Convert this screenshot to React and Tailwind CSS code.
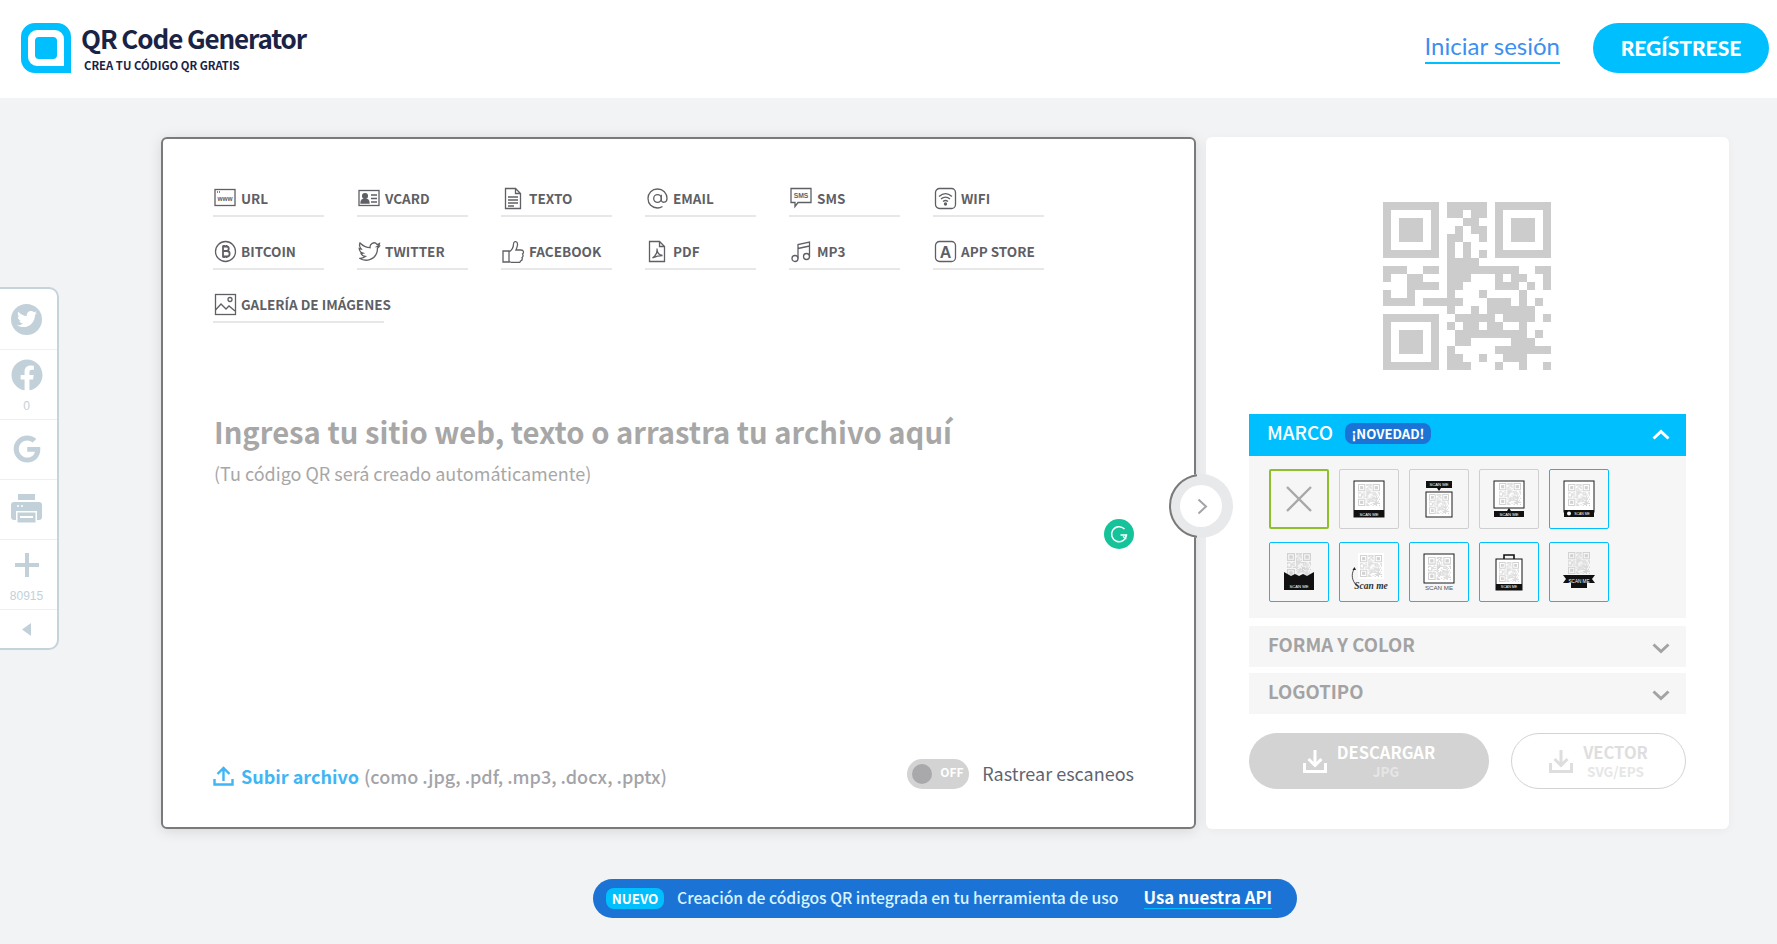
import React from 'react';
import { FaFacebook, FaGoogle, FaTwitter } from 'react-icons/fa';

const FONT = "font-['Noto_Sans_CJK_SC','Noto_Sans',sans-serif]";

const QR_ROWS = [
    [8,9,10,11,12], [8,9,11,12], [10,11], [9,11,12], [8,9,12], [8,10], [8,10,12], [8,9,10,11],
    [0,1,2,5,6,8,9,10,11,12,13,14,15,16,19,20], [0,3,4,8,9,10,14,16,17,20], [3,4,5,6,8,9,14,15,16,18,20],
    [0,3,8,12,17], [0,1,2,3,5,6,7,8,9,13,14,15,17,19], [8,11,13,14,15,16,17,18],
    [9,10,11,12,13,15,16,17,18,20], [8,10,11,13,14,17], [9,10,11,12,13,14,15,16,17,19],
    [9,10,16,17,18], [8,14,15,16,17,18,19,20], [8,9,12,15,16,17], [8,9,10,14,17,20],
];

const Finder = ({ x, y }) => (
    <g>
        <path fillRule="evenodd" d={`M${x} ${y}h7v7h-7zM${x + 1} ${y + 1}v5h5v-5z`} />
        <rect x={x + 2} y={y + 2} width="3" height="3" />
    </g>
);

const QrMarks = ({ fill = '#cccccc', crisp = true }) => (
    <g fill={fill} shapeRendering={crisp ? 'crispEdges' : 'auto'}>
        <Finder x={0} y={0} />
        <Finder x={14} y={0} />
        <Finder x={0} y={14} />
        {QR_ROWS.map((cols, r) => cols.map(c => <rect key={`${r}-${c}`} x={c} y={r} width="1" height="1" />))}
    </g>
);

const MiniQr = ({ x, y, size, fill = '#d2d2d2' }) => (
    <svg x={x} y={y} width={size} height={size} viewBox="0 0 21 21"><QrMarks fill={fill} crisp={false} /></svg>
);

const ScanText = ({ x, y, fill = '#fff', size = 4.2 }) => (
    <text x={x} y={y} textAnchor="middle" fontSize={size} fill={fill} fontFamily="Liberation Sans, sans-serif">SCAN ME</text>
);

const frames = [
    <g><rect x="15" y="12" width="30" height="36" fill="#fff" stroke="#1a1a1a" strokeWidth="1" /><MiniQr x={19} y={15} size={22} /><rect x="15" y="41" width="30" height="7" fill="#111" /><ScanText x={30} y={46.5} /></g>,
    <g><rect x="17" y="12" width="26" height="7" fill="#111" /><path d="M28 19h4l-2 3z" fill="#111" /><ScanText x={30} y={17.2} /><rect x="17" y="23" width="26" height="25" fill="#fff" stroke="#1a1a1a" strokeWidth="1" /><MiniQr x={20} y={25} size={20} /></g>,
    <g><rect x="15" y="12" width="30" height="27" fill="#fff" stroke="#1a1a1a" strokeWidth="1" /><MiniQr x={20} y={14} size={22} /><path d="M28 42l2-3 2 3z" fill="#111" /><rect x="15" y="42" width="30" height="6" fill="#111" /><ScanText x={30} y={46.5} /></g>,
    <g><rect x="15" y="12" width="30" height="31" fill="#fff" stroke="#1a1a1a" strokeWidth="1" /><MiniQr x={19} y={15} size={22} /><rect x="15" y="41" width="30" height="7" fill="#111" /><circle cx="20" cy="44.5" r="2" fill="#fff" /><ScanText x={33} y={46} size={3.4} /></g>,
    <g><MiniQr x={18} y={11} size={24} /><path d="M15 30l7 4 4-2 4 2 4-2 4 2 7-4v18H15z" fill="#111" /><ScanText x={30} y={45.5} /></g>,
    <g><rect x="19" y="11" width="26" height="26" fill="#fff" /><MiniQr x={21} y={13} size={22} /><path d="M15 27c-3 6-2 11 2 16" fill="none" stroke="#222" strokeWidth="0.8" /><path d="M13.5 28l2-3 1.5 3z" fill="#222" /><text x="32" y="47" textAnchor="middle" fontSize="9.500" fontWeight="700" fontStyle="italic" fill="#333" fontFamily="Liberation Serif, serif">Scan me</text></g>,
    <g><rect x="15" y="12" width="30" height="29" fill="#fff" stroke="#1a1a1a" strokeWidth="1" /><MiniQr x={19} y={15} size={23} /><ScanText x={30} y={48} fill="#555" size={6.2} /></g>,
    <g><path d="M25 17v-4h10v4" fill="none" stroke="#111" strokeWidth="1.6" /><rect x="17" y="17" width="26" height="31" fill="#fff" stroke="#111" strokeWidth="1" /><MiniQr x={20} y={20} size={20} /><rect x="17" y="42" width="26" height="6" fill="#111" /><ScanText x={30} y={46.4} size={3.6} /></g>,
    <g><MiniQr x={19} y={10} size={22} /><path d="M14 33h32l-3 4 3 4H38v5H22v-5H14l3-4z" fill="#111" /><ScanText x={30} y={41} size={4.6} /></g>,
];

const FrameThumb = ({ border, children }) => (
    <div className={`w-[60px] h-[60px] rounded-[2px] ${border} bg-[#f6f6f6]`}>
        <svg width="100%" height="100%" viewBox="0 0 58 58">
            <g transform="translate(-1 -1)">{children}</g>
        </svg>
    </div>
);

const TabIcon = ({ children }) => (
    <svg width="23" height="23" viewBox="0 0 23 23" fill="none" stroke="#5f5f66" strokeWidth="1.3" className="shrink-0">{children}</svg>
);

const tabs = [
    { label: 'URL', icon: <><rect x="1" y="2.5" width="20" height="16" /><path d="M3 5h1M5 5h1" /><text x="11" y="14" textAnchor="middle" fontSize="6.5" fontWeight="700" fill="#5f5f66" stroke="none" fontFamily="Liberation Sans, sans-serif">www</text></> },
    { label: 'VCARD', icon: <><rect x="1" y="3.5" width="20" height="15" /><circle cx="7" cy="9" r="2.4" fill="#5f5f66" /><path d="M3 16c0-5 8-5 8 0z" fill="#5f5f66" /><path d="M13 8h6M13 11.500h6M13 15h6" /></> },
    { label: 'TEXTO', icon: <><path d="M3.500 1.500h10l5 5v15h-15zM13.500 1.500v5h5" /><path d="M6 10h10M6 13h10M6 16h10M6 19h6" /></> },
    { label: 'EMAIL', icon: <><circle cx="11.500" cy="11.500" r="3.800" /><path d="M15.300 7.700v5.300c0 3.200 5.700 3.200 5.700-1.500C21 6 17 2 11.500 2S2 6 2 11.500 6 21 11.500 21c2 0 3.500-.5 5-1.500" /></> },
    { label: 'SMS', icon: <><path d="M1 1.500h20v14H8l-3 4v-4H1z" /><text x="11" y="11" textAnchor="middle" fontSize="6.800" fontWeight="700" fill="#5f5f66" stroke="none" fontFamily="Liberation Sans, sans-serif">SMS</text></> },
    { label: 'WIFI', icon: <><rect x="1.500" y="1.500" width="20" height="20" rx="4" /><path d="M5 9.500c4-3.500 9-3.500 13 0M7 12c3-2.500 6-2.500 9 0M9 14.500c1.500-1.200 3.500-1.200 5 0" /><circle cx="11.500" cy="17" r="1" fill="#5f5f66" /></> },
    { label: 'BITCOIN', icon: <><circle cx="11.500" cy="11.500" r="10" /><path d="M9 6.500h3.500c3 0 3 4.500 0 4.500H9h4c3.500 0 3.500 5.500 0 5.500H9zM10 5v2M12.500 5v2M10 16v2M12.500 16v2" strokeWidth="1.800" /></> },
    { label: 'TWITTER', icon: <path d="M21.500 3.500c-.8.600-1.500.9-2.500 1-1-1.500-3.200-2-4.800-1.200-1.800.9-2.400 2.600-2.100 4.400C8 7.500 4.500 5.500 2 3c-1 2.500-.3 4.500 1.200 6-.8 0-1.400-.2-2-.5.200 2.500 1.500 4 3.800 4.700-.7.200-1.400.2-2 .1.700 2 2.200 3 4.300 3.200-2 1.500-4 2-6 1.800 7 4 15 1.500 17.500-5.500.5-1.500.7-3 .6-4.500 1-.7 1.800-1.500 2.100-2.300-.8.300-1.500.5-2.300.5.900-.5 1.800-1.300 2.300-2.500z" /> },
    { label: 'FACEBOOK', icon: <><path d="M1 11h6v11H1zM7 12c3-2 4.500-5 4.500-8 0-3.500 4.500-3 4 1-.2 1.500-.7 3-1.500 5h5c3 0 3 3 1.500 4 1 1.500.5 3-.5 3.500.5 1.500 0 3-1.500 3.500 0 1-.5 1.500-2 1.500H11c-2 0-3-.5-4-1" /></> },
    { label: 'PDF', icon: <><path d="M3.500 1.500h10l5 5v15h-15zM13.500 1.500v5h5" /><path d="M6.500 18c3-2 5-6 4.500-9.500 0 4 2 6.500 5.500 7-3.500 0-7 1-10 2.500z" /></> },
    { label: 'MP3', icon: <><circle cx="5" cy="18.500" r="3" /><circle cx="16.500" cy="16.500" r="3" /><path d="M8 18.500V4.500L19.500 2v14.500M8 8.500L19.500 6" /></> },
    { label: 'APP STORE', icon: <><rect x="1.500" y="1.500" width="20" height="20" rx="4" /><text x="11.500" y="17.500" textAnchor="middle" fontSize="16" fontWeight="700" fill="#5f5f66" stroke="none" fontFamily="Liberation Sans, sans-serif">A</text></> },
    { label: 'GALERÍA DE IMÁGENES', icon: <><rect x="1.500" y="1.500" width="20" height="20" /><circle cx="16" cy="6.500" r="2" /><path d="M1.500 17l5.500-6 5 5 3-3 6 5" /></> },
];

const DownloadIcon = ({ color, className }) => (
    <svg width="24" height="24" viewBox="0 0 24 24" fill="none" stroke={color} strokeWidth="3" className={className}>
        <path d="M12 1v15M5.500 10l6.500 6.500 6.500-6.500M1.500 14v8.500h21V14" />
    </svg>
);

const Chevron = ({ up }) => (
    <svg width="18" height="12" viewBox="0 0 18 12" fill="none" stroke={up ? '#fff' : '#a3a3a3'} strokeWidth="3" className={up ? 'rotate-180' : ''}>
        <path d="M1.500 2.500L9 9.500l7.500-7" />
    </svg>
);

const SideRow = ({ height, count, countGap = 'mt-[5px]', extra = '', children, last }) => (
    <div className={`${height} ${extra} pr-[4px] flex flex-col items-center justify-center ${last ? '' : 'border-b border-[#edf0f2]'}`}>
        {children}
        {count && <span className={`font-['Liberation_Sans',sans-serif] text-[12px] leading-[14px] ${countGap} text-[#c2d1d9]`}>{count}</span>}
    </div>
);

const App = () => {
    return (
        <div className={`${FONT} relative min-h-screen h-[944px] overflow-hidden bg-[#f2f3f5]`}>
            {/* Header */}
            <header className="h-[98px] bg-white flex items-center justify-between pl-[21px] pr-[8px] pb-[2px]">
                <div className="flex items-start">
                    <svg width="50" height="50" viewBox="0 0 50 50" className="shrink-0">
                        <path fillRule="evenodd" fill="#00bfff" d="M14 0h22a14 14 0 0 1 14 14v36H14A14 14 0 0 1 0 36V14A14 14 0 0 1 14 0zm2 7a9 9 0 0 0-9 9v18a9 9 0 0 0 9 9h27V16a9 9 0 0 0-9-9z" />
                        <rect x="14" y="14" width="22" height="22" rx="4" fill="#00bfff" />
                    </svg>
                    <div className="ml-[10px] pt-[1px]">
                        <div className="text-[26px] leading-[27px] font-bold tracking-[-1.100px] text-[#1b2345] whitespace-nowrap">QR Code Generator</div>
                        <div className="text-[11.300px] leading-[14px] mt-[7px] ml-[3px] font-bold text-[#1b2345] whitespace-nowrap">CREA TU CÓDIGO QR GRATIS</div>
                    </div>
                </div>
                <div className="flex items-center">
                    <a className="font-['Lato',sans-serif] text-[24px] leading-[30px] text-[#3b8ff0] border-b-2 border-[#00bfff] pb-[1px] mr-[33px] mb-[2px]">Iniciar sesión</a>
                    <button className="w-[176px] h-[50px] rounded-full bg-[#00bfff] text-white font-['Lato',sans-serif] font-black text-[21px]">REGÍSTRESE</button>
                </div>
            </header>

            {/* Share bar */}
            <aside className="absolute left-0 top-[287px] w-[59px] h-[363px] bg-white border-2 border-l-0 border-[#c5d3db] rounded-r-[10px] text-[#c2d1d9]">
                <SideRow height="h-[61px]">
                    <div className="w-[31px] h-[31px] rounded-full bg-[#c2d1d9] flex items-center justify-center"><FaTwitter size={20} color="#fff" /></div>
                </SideRow>
                <SideRow height="h-[70px]" count="0" countGap="mt-[8px]" extra="pt-[3px]"><FaFacebook size={32} /></SideRow>
                <SideRow height="h-[60px]" extra="pb-[1px]"><FaGoogle size={28} /></SideRow>
                <SideRow height="h-[60px]" extra="pb-[1px]">
                    <svg width="31" height="30" viewBox="0 0 31 30">
                        <rect x="7" y="0" width="17" height="6" fill="#c2d1d9" />
                        <rect x="0" y="8" width="31" height="18" rx="3" fill="#c2d1d9" />
                        <rect x="5" y="17" width="21" height="13" fill="#fff" />
                        <rect x="6.500" y="18.500" width="18" height="10" fill="#c2d1d9" />
                        <rect x="9" y="22" width="13" height="2" fill="#fff" />
                        <path d="M6 12h2M10 12h2" stroke="#fff" strokeWidth="1.500" />
                    </svg>
                </SideRow>
                <SideRow height="h-[70px]" count="80915" countGap="mt-[12px]" extra="pt-[7px]">
                    <svg width="24" height="24" viewBox="0 0 24 24" fill="#c2d1d9"><path d="M10 0h4v10h10v4H14v10h-4V14H0v-4h10z" /></svg>
                </SideRow>
                <SideRow height="h-[38px]" last>
                    <svg width="9" height="13" viewBox="0 0 9 13" fill="#c2d1d9"><path d="M9 0v13L0 6.500z" /></svg>
                </SideRow>
            </aside>

            <main className="flex pl-[161px] pt-[39px]">
                {/* Editor card */}
                <section className="relative w-[1035px] h-[692px] flex flex-col bg-white border-2 border-[#7a7a7a] rounded-[6px] shadow-[0_2px_14px_rgba(0,0,0,0.12)] pl-[50px] pr-[60px] pt-[44px] pb-[38px]">
                    <div className="flex flex-wrap w-[880px]">
                        {tabs.map(t => (
                            <div key={t.label} className={`${t.label.startsWith('GAL') ? 'w-[171px]' : 'w-[111px]'} h-[34px] pt-[4px] mb-[19px] mr-[33px] border-b-2 border-[#e7e7e7] flex items-start gap-[4px] pl-[1px]`}>
                                <TabIcon>{t.icon}</TabIcon>
                                <span className="text-[13.500px] leading-[22px] font-bold text-[#5f5f66] whitespace-nowrap">{t.label}</span>
                            </div>
                        ))}
                    </div>

                    <h1 className="mt-[69px] ml-[1px] text-[29.200px] leading-[40px] font-bold text-[#a7a7a7] whitespace-nowrap">Ingresa tu sitio web, texto o arrastra tu archivo aquí</h1>
                    <p className="mt-[10px] ml-[1px] text-[18px] leading-[24px] text-[#a7a7a7]">(Tu código QR será creado automáticamente)</p>

                    <div className="mt-auto flex items-center justify-between h-[30px]">
                        <div className="flex items-center text-[18px] leading-[24px] translate-y-[2px]">
                            <svg width="21" height="20" viewBox="0 0 21 20" fill="none" stroke="#3fb5f5" strokeWidth="2.400" className="mr-[7px]">
                                <path d="M10.500 15V2M4.500 8l6-6 6 6M1.500 13v5.500h18V13" />
                            </svg>
                            <span className="font-bold text-[#3fb5f5]">Subir archivo</span>
                            <span className="ml-[5px] font-medium text-[#a3a3a8]">(como .jpg, .pdf, .mp3, .docx, .pptx)</span>
                        </div>
                        <div className="flex items-center">
                            <div className="w-[62px] h-[30px] rounded-full bg-[#d3d3d3] flex items-center pl-[5px] mr-[13px]">
                                <span className="w-[20px] h-[20px] rounded-full bg-[#a9a9ac]" />
                                <span className="ml-[8px] -mt-[4px] text-[12px] leading-[14px] font-bold text-white">OFF</span>
                            </div>
                            <span className="text-[18px] leading-[24px] -translate-y-[1px] text-[#5f6570]">Rastrear escaneos</span>
                        </div>
                    </div>

                    {/* Grammarly badge */}
                    <div className="absolute left-[941px] top-[380px] w-[30px] h-[30px] rounded-full bg-[#15c39a] flex items-center justify-center">
                        <svg width="20" height="20" viewBox="0 0 20 20" fill="none" stroke="#fff" strokeWidth="1.500">
                            <path d="M15.500 5a7.500 7.500 0 1 0 2 6h-6M17.500 11l-2 4M14 12.500l3.500 2.500" />
                        </svg>
                    </div>

                    {/* Next arrow */}
                    <div className="absolute z-10 left-[1006px] top-[335px] w-[64px] h-[64px] rounded-full bg-[#e8e9eb] flex items-center justify-center">
                        <div className="absolute inset-0 rounded-full border-2 border-[#7a7a7a] [clip-path:inset(0_36px_0_0)]" />
                        <div className="w-[42px] h-[42px] rounded-full bg-white flex items-center justify-center">
                            <svg width="11" height="17" viewBox="0 0 11 17" fill="none" stroke="#a3a3a8" strokeWidth="2" className="translate-x-[1px]"><path d="M1.500 1.500l7.500 7-7.500 7" /></svg>
                        </div>
                    </div>
                </section>

                {/* Options panel */}
                <section className="relative ml-[10px] w-[523px] h-[692px] bg-white rounded-[6px] shadow-[0_2px_10px_rgba(0,0,0,0.04)] pl-[43px] pr-[43px] pt-[65px]">
                    <svg width="168" height="168" viewBox="0 0 21 21" className="block ml-[134px]"><QrMarks /></svg>

                    <div className="mt-[44px] h-[42px] bg-[#00bfff] flex items-center pl-[19px] pr-[16px]">
                        <span className="-mt-[6px] -ml-[1px] text-[19px] leading-[26px] font-medium text-white">MARCO</span>
                        <span className="ml-[12px] h-[21px] w-[86px] text-center rounded-[8px] bg-[#1b74d5] text-[13.200px] leading-[21px] font-bold text-white -mt-[3px]">¡NOVEDAD!</span>
                        <span className="ml-auto"><Chevron up /></span>
                    </div>
                    <div className="h-[162px] bg-[#f6f6f6] pl-[20px] pt-[13px]">
                        <div className="grid grid-cols-[repeat(5,60px)] gap-x-[10px] gap-y-[13px]">
                            <div className="w-[60px] h-[60px] rounded-[2px] border-2 border-[#8dc02c] flex items-center justify-center bg-[#f6f6f6]">
                                <svg width="26" height="26" viewBox="0 0 26 26" stroke="#a8a8a8" strokeWidth="2.400"><path d="M1 1l24 24M25 1L1 25" /></svg>
                            </div>
                            {frames.map((f, i) => (
                                <FrameThumb key={i} border={i < 3 ? 'border border-[#cfcfcf]' : 'border border-[#00bfff]'}>{f}</FrameThumb>
                            ))}
                        </div>
                    </div>

                    <div className="mt-[8px] h-[41px] rounded-t-[2px] bg-[#f6f6f6] flex items-center justify-between pl-[19px] pr-[16px]">
                        <span className="text-[18.500px] leading-[26px] -mt-[6px] font-bold text-[#a3a3a3]">FORMA Y COLOR</span>
                        <span className="mt-[3px]"><Chevron /></span>
                    </div>
                    <div className="mt-[6px] h-[41px] bg-[#f6f6f6] flex items-center justify-between pl-[19px] pr-[16px]">
                        <span className="text-[18.500px] leading-[26px] -mt-[6px] font-bold text-[#a3a3a3]">LOGOTIPO</span>
                        <span className="mt-[3px]"><Chevron /></span>
                    </div>

                    <div className="mt-[19px] flex justify-between">
                        <button className="w-[240px] h-[56px] rounded-full bg-[#d3d3d3] flex items-center justify-center text-white">
                            <DownloadIcon color="#ffffff" className="mr-[10px]" />
                            <span className="flex flex-col items-center -mt-[1px]">
                                <span className="text-[16.500px] leading-[21px] font-bold">DESCARGAR</span>
                                <span className="text-[13.500px] leading-[17px] font-bold text-[#e6e6e6]">JPG</span>
                            </span>
                        </button>
                        <button className="w-[175px] h-[56px] rounded-full border border-[#d3d3d3] flex items-center justify-center">
                            <DownloadIcon color="#dedede" className="mr-[10px]" />
                            <span className="flex flex-col items-center -mt-[1px]">
                                <span className="text-[16.500px] leading-[21px] font-bold text-[#dedede]">VECTOR</span>
                                <span className="text-[13.500px] leading-[17px] font-bold text-[#e6e6e6]">SVG/EPS</span>
                            </span>
                        </button>
                    </div>
                </section>
            </main>

            {/* API banner */}
            <div className="mt-[50px] flex justify-center pl-[113px]">
                <div className="w-[704px] h-[39px] rounded-full bg-[#1b74d5] flex items-center pl-[13px]">
                    <span className="shrink-0 w-[58px] h-[21px] rounded-[8px] bg-[#00bfff] text-center text-[13.400px] leading-[21px] font-bold text-white">NUEVO</span>
                    <span className="ml-[13px] -mt-[1px] text-[15.700px] leading-[24px] font-medium text-[#d9f3ff] whitespace-nowrap">Creación de códigos QR integrada en tu herramienta de uso</span>
                    <a className="ml-[25px] -mt-[2px] text-[16.800px] leading-[22px] font-bold text-white border-b border-[#00bfff] whitespace-nowrap">Usa nuestra API</a>
                </div>
            </div>
        </div>
    );
};

export default App;
